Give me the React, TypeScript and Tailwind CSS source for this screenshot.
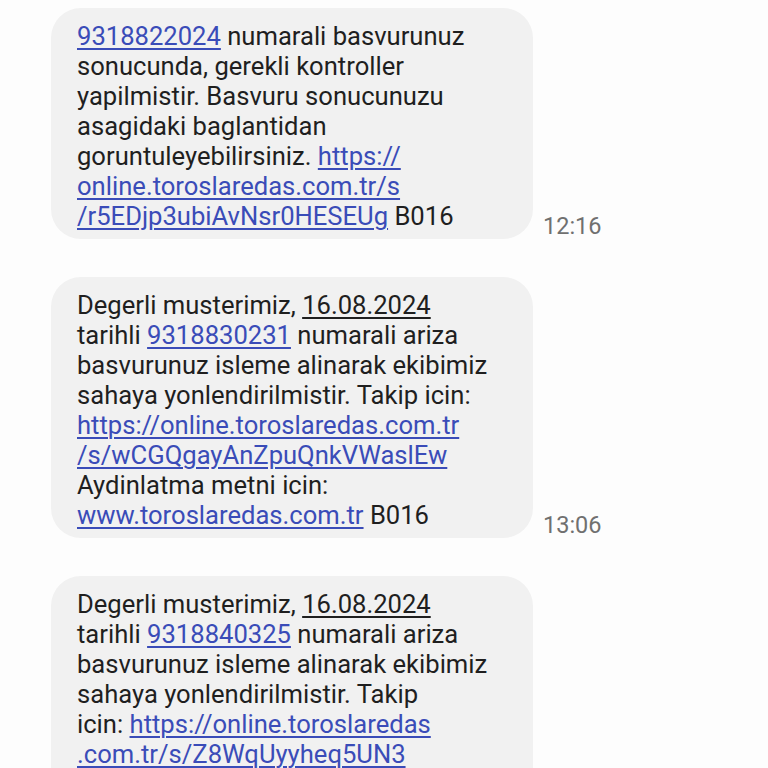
import React from "react";

const L = ({ children }: { children: React.ReactNode }) => (
  <span className="text-[#3a4cb8] underline decoration-[1.5px] underline-offset-[3px]">{children}</span>
);
const U = ({ children }: { children: React.ReactNode }) => (
  <span className="underline decoration-[1.5px] underline-offset-[3px]">{children}</span>
);

function Row({ children, time }: { children: React.ReactNode; time?: string }) {
  return (
    <div className="flex items-end">
      <div className="w-[482px] shrink-0 rounded-[30px] bg-[#f1f1f1] pl-[26px] pr-[16px] pt-[13px] pb-[8px] text-[25.6px] leading-[30px] text-[#1f1f1f] whitespace-nowrap">
        {children}
      </div>
      {time && (
        <div className="ml-[10px] mb-[0px] text-[23.5px] leading-[26px] text-[#707070]">{time}</div>
      )}
    </div>
  );
}

export default function App() {
  return (
    <div
      className="h-[768px] w-[768px] overflow-hidden bg-[#fdfdfd] pl-[51px] pt-[8px]"
      style={{ fontFamily: "Roboto, 'Noto Sans', sans-serif" }}
    >
      <div className="flex flex-col gap-[38px]">
        <Row time="12:16">
          <L>9318822024</L> numarali basvurunuz<br />
          sonucunda, gerekli kontroller<br />
          yapilmistir. Basvuru sonucunuzu<br />
          asagidaki baglantidan<br />
          goruntuleyebilirsiniz. <L>https://</L><br />
          <L>online.toroslaredas.com.tr/s</L><br />
          <L>/r5EDjp3ubiAvNsr0HESEUg</L> B016
        </Row>
        <Row time="13:06">
          Degerli musterimiz, <U>16.08.2024</U><br />
          tarihli <L>9318830231</L> numarali ariza<br />
          basvurunuz isleme alinarak ekibimiz<br />
          sahaya yonlendirilmistir. Takip icin:<br />
          <L>https://online.toroslaredas.com.tr</L><br />
          <L>/s/wCGQgayAnZpuQnkVWaslEw</L><br />
          Aydinlatma metni icin:<br />
          <L>www.toroslaredas.com.tr</L> B016
        </Row>
        <Row time="13:41">
          Degerli musterimiz, <U>16.08.2024</U><br />
          tarihli <L>9318840325</L> numarali ariza<br />
          basvurunuz isleme alinarak ekibimiz<br />
          sahaya yonlendirilmistir. Takip<br />
          icin: <L>https://online.toroslaredas</L><br />
          <L>.com.tr/s/Z8WqUyyheq5UN3</L><br />
          <L>bNxQw</L><br />
          Aydinlatma metni icin:<br />
          <L>www.toroslaredas.com.tr</L> B016
        </Row>
      </div>
    </div>
  );
}
